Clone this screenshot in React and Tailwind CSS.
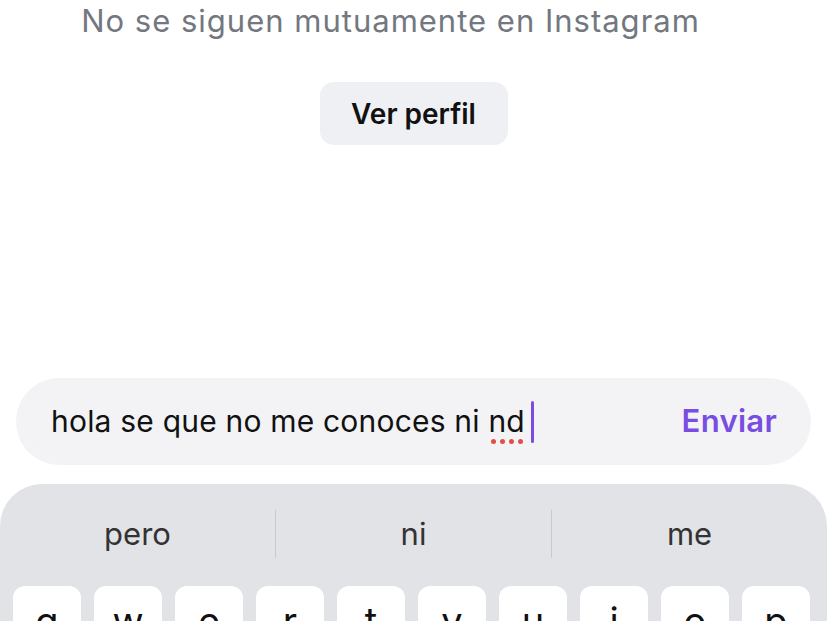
export default function App() {
  const keys = ["q", "w", "e", "r", "t", "y", "u", "i", "o", "p"];
  return (
    <div className="w-[827px] h-[621px] overflow-hidden bg-white flex flex-col" style={{ fontFamily: "Inter, 'Noto Sans', sans-serif" }}>
      <div className="shrink-0 h-[42px] flex items-center justify-center pr-[46px] text-[31px] text-[#737780] tracking-[1px]">
        No se siguen mutuamente en Instagram
      </div>
      <div className="shrink-0 flex justify-center mt-[40px]">
        <div className="w-[188px] h-[63px] rounded-[14px] bg-[#eff0f3] flex items-center justify-center text-[28px] font-semibold text-[#111]">
          Ver perfil
        </div>
      </div>
      <div className="shrink-0 h-[233px]" />
      <div className="shrink-0 mx-[16px] h-[87px] rounded-full bg-[#f3f3f5] flex items-center pl-[35px] pr-[34px]">
        <div className="flex-1 flex items-center text-[30px] text-[#111] whitespace-pre tracking-[0.2px]">
          <span>{"hola se que no me conoces ni "}</span>
          <span className="relative">
            nd
            <span className="absolute left-[3px] right-[2px] bottom-[0px] flex justify-between">
              <span className="w-[5px] h-[5px] rounded-full bg-[#e0504a]" />
              <span className="w-[5px] h-[5px] rounded-full bg-[#e0504a]" />
              <span className="w-[5px] h-[5px] rounded-full bg-[#e0504a]" />
              <span className="w-[5px] h-[5px] rounded-full bg-[#e0504a]" />
            </span>
          </span>
          <span className="ml-[6px] w-[3px] h-[42px] rounded-full bg-[#7b4ce0]" />
        </div>
        <div className="text-[31px] font-semibold text-[#7a4de2] tracking-[0.3px]">Enviar</div>
      </div>
      <div className="shrink-0 mt-[19px] h-[137px] rounded-t-[42px] bg-[#e2e3e7] flex flex-col overflow-hidden">
        <div className="shrink-0 h-[102px] flex items-center pb-[2px]">
          <div className="flex-1 text-center text-[31px] text-[#333]">pero</div>
          <div className="w-px h-[48px] bg-[#c9cacd]" />
          <div className="flex-1 text-center text-[31px] text-[#333]">ni</div>
          <div className="w-px h-[48px] bg-[#c9cacd]" />
          <div className="flex-1 text-center text-[31px] text-[#333]">me</div>
        </div>
        <div className="shrink-0 flex gap-[13px] px-[13px]">
          {keys.map((k) => (
            <div key={k} className="w-[68px] h-[60px] shrink-0 rounded-[12px] bg-white flex justify-center pt-[16px] text-[38px] leading-none text-[#111]">
              {k}
            </div>
          ))}
        </div>
      </div>
    </div>
  );
}
